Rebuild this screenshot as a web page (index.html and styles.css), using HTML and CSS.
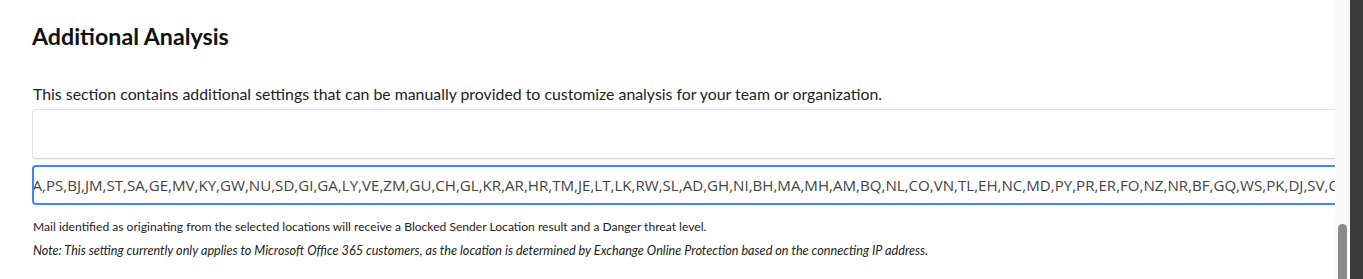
FILE: index.html
```html
<!DOCTYPE html>
<html lang="en">
<head>
<meta charset="utf-8">
<title>Additional Analysis</title>
<link rel="stylesheet" href="styles.css">
</head>
<body>
<div class="frame">
  <main class="content">
    <section class="section">
      <h2 class="title">Additional Analysis</h2>
      <p class="desc">This section contains additional settings that can be manually provided to customize analysis for your team or organization.</p>
      <div class="box"></div>
      <div class="field">
        <span class="field-text">CA,PS,BJ,JM,ST,SA,GE,MV,KY,GW,NU,SD,GI,GA,LY,VE,ZM,GU,CH,GL,KR,AR,HR,TM,JE,LT,LK,RW,SL,AD,GH,NI,BH,MA,MH,AM,BQ,NL,CO,VN,TL,EH,NC,MD,PY,PR,ER,FO,NZ,NR,BF,GQ,WS,PK,DJ,SV,CU</span>
      </div>
      <p class="help">Mail identified as originating from the selected locations will receive a Blocked Sender Location result and a Danger threat level.</p>
      <p class="note">Note: This setting currently only applies to Microsoft Office 365 customers, as the location is determined by Exchange Online Protection based on the connecting IP address.</p>
    </section>
  </main>
  <div class="scrollbar"><div class="thumb"></div></div>
  <div class="edge"></div>
</div>
</body>
</html>
```
FILE: styles.css
```css
* { box-sizing: border-box; }
html, body { margin: 0; padding: 0; }
body {
  background: #fff;
  font-family: Lato, "Open Sans", sans-serif;
  color: #1a1a1a;
  height: 279px;
  overflow: hidden;
}
.frame {
  display: flex;
  height: 279px;
}
.content {
  width: 1335px;
  flex: none;
  overflow: hidden;
  background: #fff;
}
.section {
  padding: 23px 0 0 32px;
  width: 1360px;
}
.title {
  margin: 0;
  font-size: 23.2px;
  line-height: 26px;
  font-weight: 700;
  color: #111;
}
.desc {
  margin: 35px 0 0 1px;
  font-size: 15.85px;
  line-height: 20px;
  color: #222;
}
.box {
  margin-top: 5px;
  height: 50px;
  border: 1px solid #e2e2e2;
  border-bottom-color: #d6d6d6;
  border-radius: 4px;
  background: #fff;
  box-shadow: 0 1px 2px rgba(0,0,0,0.06);
}
.field {
  margin-top: 6px;
  height: 40px;
  border: 2px solid #4285f4;
  border-radius: 4px;
  background: #fff;
  overflow: hidden;
  white-space: nowrap;
  display: flex;
  align-items: center;
}
.field-text {
  font-family: "Open Sans", sans-serif;
  font-size: 15.1px;
  color: #444;
  margin-left: -11px;
}
.help {
  margin: 14px 0 0 1px;
  font-size: 12.1px;
  line-height: 16px;
  color: #222;
}
.note {
  margin: 8px 0 0 1px;
  font-size: 12.65px;
  line-height: 16px;
  font-style: italic;
  color: #222;
}
.scrollbar {
  width: 15px;
  flex: none;
  background: #fafafa;
  position: relative;
}
.thumb {
  position: absolute;
  left: 3px;
  top: 224px;
  width: 9px;
  height: 70px;
  border-radius: 5px;
  background: #8a8a8a;
}
.edge {
  flex: 1;
  background: #3a3a3a;
}
```
